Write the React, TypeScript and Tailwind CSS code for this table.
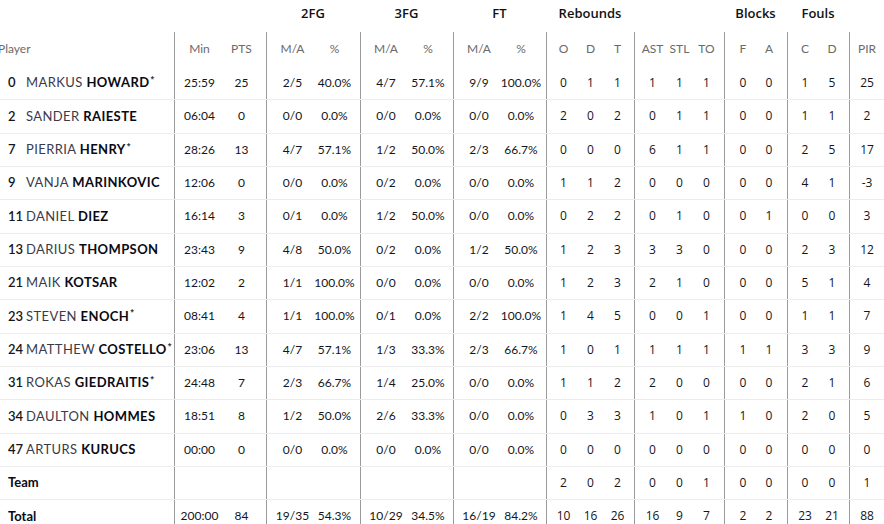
import React from "react";

type Player = {
  no: string;
  first: string;
  last: string;
  starter?: boolean;
  stats: string[];
};

// stats order: Min PTS | 2FG M/A % | 3FG M/A % | FT M/A % | O D T | AST STL TO | F A | C D | PIR
const players: Player[] = [
  { no: "0", first: "MARKUS", last: "HOWARD", starter: true, stats: ["25:59", "25", "2/5", "40.0%", "4/7", "57.1%", "9/9", "100.0%", "0", "1", "1", "1", "1", "1", "0", "0", "1", "5", "25"] },
  { no: "2", first: "SANDER", last: "RAIESTE", stats: ["06:04", "0", "0/0", "0.0%", "0/0", "0.0%", "0/0", "0.0%", "2", "0", "2", "0", "1", "1", "0", "0", "1", "1", "2"] },
  { no: "7", first: "PIERRIA", last: "HENRY", starter: true, stats: ["28:26", "13", "4/7", "57.1%", "1/2", "50.0%", "2/3", "66.7%", "0", "0", "0", "6", "1", "1", "0", "0", "2", "5", "17"] },
  { no: "9", first: "VANJA", last: "MARINKOVIC", stats: ["12:06", "0", "0/0", "0.0%", "0/2", "0.0%", "0/0", "0.0%", "1", "1", "2", "0", "0", "0", "0", "0", "4", "1", "-3"] },
  { no: "11", first: "DANIEL", last: "DIEZ", stats: ["16:14", "3", "0/1", "0.0%", "1/2", "50.0%", "0/0", "0.0%", "0", "2", "2", "0", "1", "0", "0", "1", "0", "0", "3"] },
  { no: "13", first: "DARIUS", last: "THOMPSON", stats: ["23:43", "9", "4/8", "50.0%", "0/2", "0.0%", "1/2", "50.0%", "1", "2", "3", "3", "3", "0", "0", "0", "2", "3", "12"] },
  { no: "21", first: "MAIK", last: "KOTSAR", stats: ["12:02", "2", "1/1", "100.0%", "0/0", "0.0%", "0/0", "0.0%", "1", "2", "3", "2", "1", "0", "0", "0", "5", "1", "4"] },
  { no: "23", first: "STEVEN", last: "ENOCH", starter: true, stats: ["08:41", "4", "1/1", "100.0%", "0/1", "0.0%", "2/2", "100.0%", "1", "4", "5", "0", "0", "1", "0", "0", "1", "1", "7"] },
  { no: "24", first: "MATTHEW", last: "COSTELLO", starter: true, stats: ["23:06", "13", "4/7", "57.1%", "1/3", "33.3%", "2/3", "66.7%", "1", "0", "1", "1", "1", "1", "1", "1", "3", "3", "9"] },
  { no: "31", first: "ROKAS", last: "GIEDRAITIS", starter: true, stats: ["24:48", "7", "2/3", "66.7%", "1/4", "25.0%", "0/0", "0.0%", "1", "1", "2", "2", "0", "0", "0", "0", "2", "1", "6"] },
  { no: "34", first: "DAULTON", last: "HOMMES", stats: ["18:51", "8", "1/2", "50.0%", "2/6", "33.3%", "0/0", "0.0%", "0", "3", "3", "1", "0", "1", "1", "0", "2", "0", "5"] },
  { no: "47", first: "ARTURS", last: "KURUCS", stats: ["00:00", "0", "0/0", "0.0%", "0/0", "0.0%", "0/0", "0.0%", "0", "0", "0", "0", "0", "0", "0", "0", "0", "0", "0"] },
];

const teamStats = ["", "", "", "", "", "", "", "", "2", "0", "2", "0", "0", "1", "0", "0", "0", "0", "1"];
const totalStats = ["200:00", "84", "19/35", "54.3%", "10/29", "34.5%", "16/19", "84.2%", "10", "16", "26", "16", "9", "7", "2", "2", "23", "21", "88"];

// column groups: group width, cell width, cells per group, font, top label
const groups = [
  { w: "w-[92px]", cell: "w-[42px]", n: 2, font: "font-['Lato',sans-serif]", label: "" },
  { w: "w-[94px]", cell: "w-[42px]", n: 2, font: "font-['Lato',sans-serif]", label: "2FG" },
  { w: "w-[93px]", cell: "w-[42px]", n: 2, font: "font-['Lato',sans-serif]", label: "3FG" },
  { w: "w-[93px]", cell: "w-[42px]", n: 2, font: "font-['Lato',sans-serif]", label: "FT" },
  { w: "w-[88px]", cell: "w-[27px]", n: 3, font: "font-['Open_Sans',sans-serif]", label: "Rebounds" },
  { w: "w-[90px]", cell: "w-[27px]", n: 3, font: "font-['Open_Sans',sans-serif]", label: "" },
  { w: "w-[63px]", cell: "w-[26px]", n: 2, font: "font-['Open_Sans',sans-serif]", label: "Blocks" },
  { w: "w-[62px]", cell: "w-[27px]", n: 2, font: "font-['Open_Sans',sans-serif]", label: "Fouls" },
  { w: "w-[35px]", cell: "w-[35px]", n: 1, font: "font-['Open_Sans',sans-serif]", label: "" },
];

const headLabels = ["Min", "PTS", "M/A", "%", "M/A", "%", "M/A", "%", "O", "D", "T", "AST", "STL", "TO", "F", "A", "C", "D", "PIR"];

function StatCells({ values, head }: { values: string[]; head?: boolean }) {
  let i = 0;
  return (
    <>
      {groups.map((g, gi) => {
        const cells = values.slice(i, i + g.n);
        i += g.n;
        return (
          <div key={gi} className={`${g.w} shrink-0 h-full border-l border-[#9b9b9b] flex items-center justify-center`}>
            {cells.map((v, ci) => (
              <div
                key={ci}
                className={`${g.cell} text-center whitespace-nowrap ${
                  head ? "font-['Lato',sans-serif] text-[12px] text-[#6a6a6a]" : `${g.font} text-[12px] text-[#151520]`
                }`}
              >
                {v}
              </div>
            ))}
          </div>
        );
      })}
    </>
  );
}

function Row({ children, values, first }: { children: React.ReactNode; values: string[]; first?: boolean }) {
  return (
    <div className={`flex h-[33.33px] ${first ? "" : "border-t border-[#ececec]"}`}>
      <div className="w-[174px] shrink-0 flex items-center pl-[8px] whitespace-nowrap">{children}</div>
      <StatCells values={values} />
    </div>
  );
}

export default function App() {
  return (
    <div className="w-[884px] h-[524px] overflow-hidden bg-white text-[#151520]">
      <div className="flex h-[32px]">
        <div className="w-[174px] shrink-0" />
        {groups.map((g, i) => (
          <div
            key={i}
            className={`${g.w} shrink-0 pt-[4px] text-center font-['Open_Sans',sans-serif] font-semibold text-[13px] text-[#111]`}
          >
            {g.label}
          </div>
        ))}
      </div>

      <div className="flex h-[34px]">
        <div className="w-[174px] shrink-0 flex items-center">
          <span className="-ml-[2px] font-['Lato',sans-serif] text-[12px] text-[#6a6a6a]">Player</span>
        </div>
        <StatCells values={headLabels} head />
      </div>

      {players.map((p, idx) => (
        <Row key={p.no} values={p.stats} first={idx === 0}>
          <span className="w-[18px] shrink-0 font-['Lato',sans-serif] font-semibold text-[13px] text-[#151520]">{p.no}</span>
          <span className="font-['Lato',sans-serif] tracking-[0.4px] text-[13px] text-[#3a3a4a]">{p.first}&nbsp;</span>
          <span className="font-['Lato',sans-serif] tracking-[0.4px] font-bold text-[13px] text-[#0a0a14]">{p.last}</span>
          {p.starter && <sup className="text-[7px] font-bold -top-[4px] ml-[1px] text-[#333]">*</sup>}
        </Row>
      ))}

      <Row values={teamStats}>
        <span className="font-['Lato',sans-serif] font-bold text-[13px] text-[#0a0a14]">Team</span>
      </Row>
      <Row values={totalStats}>
        <span className="font-['Lato',sans-serif] font-bold text-[13px] text-[#0a0a14]">Total</span>
      </Row>
    </div>
  );
}
